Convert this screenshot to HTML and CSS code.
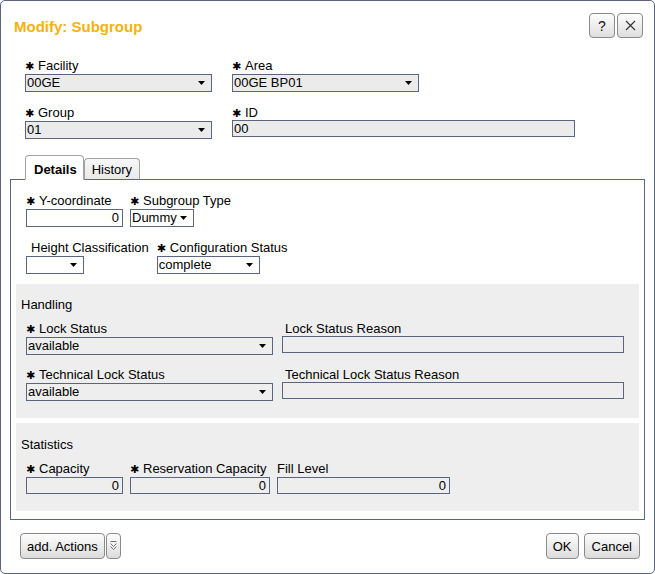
FILE: index.html
```html
<!DOCTYPE html>
<html>
<head>
<meta charset="utf-8">
<title>Modify: Subgroup</title>
<link rel="stylesheet" href="styles.css">
</head>
<body>
<div class="dialog">
  <div class="header">
    <h1 class="title">Modify: Subgroup</h1>
    <div class="hbtns">
      <button class="ibtn">?</button>
      <button class="ibtn"><svg width="11" height="11" viewBox="0 0 11 11"><path d="M1 1 L10 10 M10 1 L1 10" stroke="#333" stroke-width="1.1" fill="none"/></svg></button>
    </div>
  </div>

  <div class="topform">
    <div class="field">
      <label class="lbl"><span class="req">✱</span>Facility</label>
      <div class="sel ro w187"><span>00GE</span><svg class="arr" width="7" height="4" viewBox="0 0 7 4"><path d="M0 0 H7 L3.5 4 Z" fill="#000"/></svg></div>
    </div>
    <div class="field">
      <label class="lbl"><span class="req">✱</span>Area</label>
      <div class="sel ro w187"><span>00GE BP01</span><svg class="arr" width="7" height="4" viewBox="0 0 7 4"><path d="M0 0 H7 L3.5 4 Z" fill="#000"/></svg></div>
    </div>
    <div class="field">
      <label class="lbl"><span class="req">✱</span>Group</label>
      <div class="sel ro w187"><span>01</span><svg class="arr" width="7" height="4" viewBox="0 0 7 4"><path d="M0 0 H7 L3.5 4 Z" fill="#000"/></svg></div>
    </div>
    <div class="field">
      <label class="lbl"><span class="req">✱</span>ID</label>
      <div class="inp ro w343 left">00</div>
    </div>
  </div>

  <div class="tabs">
    <div class="tab active">Details</div>
    <div class="tab">History</div>
  </div>
  <div class="panel">
    <div class="row r1">
      <div class="field">
        <label class="lbl"><span class="req">✱</span>Y-coordinate</label>
        <div class="inp w97">0</div>
      </div>
      <div class="field">
        <label class="lbl"><span class="req">✱</span>Subgroup Type</label>
        <div class="sel w64"><span>Dummy</span><svg class="arr" width="7" height="4" viewBox="0 0 7 4"><path d="M0 0 H7 L3.5 4 Z" fill="#000"/></svg></div>
      </div>
    </div>
    <div class="row r2">
      <div class="field">
        <label class="lbl ind5">Height Classification</label>
        <div class="sel w58"><span></span><svg class="arr" width="7" height="4" viewBox="0 0 7 4"><path d="M0 0 H7 L3.5 4 Z" fill="#000"/></svg></div>
      </div>
      <div class="field">
        <label class="lbl"><span class="req">✱</span>Configuration Status</label>
        <div class="sel w103"><span>complete</span><svg class="arr" width="7" height="4" viewBox="0 0 7 4"><path d="M0 0 H7 L3.5 4 Z" fill="#000"/></svg></div>
      </div>
    </div>

    <div class="box handling">
      <div class="boxhead">Handling</div>
      <div class="row hrow">
        <div class="field">
          <label class="lbl"><span class="req">✱</span>Lock Status</label>
          <div class="sel flat w247"><span>available</span><svg class="arr" width="7" height="4" viewBox="0 0 7 4"><path d="M0 0 H7 L3.5 4 Z" fill="#000"/></svg></div>
        </div>
        <div class="field">
          <label class="lbl ind3">Lock Status Reason</label>
          <div class="inp flat w342"></div>
        </div>
      </div>
      <div class="row hrow second">
        <div class="field">
          <label class="lbl"><span class="req">✱</span>Technical Lock Status</label>
          <div class="sel flat w247"><span>available</span><svg class="arr" width="7" height="4" viewBox="0 0 7 4"><path d="M0 0 H7 L3.5 4 Z" fill="#000"/></svg></div>
        </div>
        <div class="field">
          <label class="lbl ind3">Technical Lock Status Reason</label>
          <div class="inp flat w342"></div>
        </div>
      </div>
    </div>

    <div class="box stats">
      <div class="boxhead">Statistics</div>
      <div class="row srow">
        <div class="field">
          <label class="lbl"><span class="req">✱</span>Capacity</label>
          <div class="inp flat w97 short">0</div>
        </div>
        <div class="field">
          <label class="lbl"><span class="req">✱</span>Reservation Capacity</label>
          <div class="inp flat w140 short">0</div>
        </div>
        <div class="field">
          <label class="lbl">Fill Level</label>
          <div class="inp flat w173 short">0</div>
        </div>
      </div>
    </div>
  </div>

  <div class="footer">
    <div class="fleft">
      <button class="btn">add. Actions</button>
      <button class="btn tog"><svg width="7" height="10" viewBox="0 0 7 10"><path d="M0.5 0.5 H6.5 M0.5 2.5 L3.5 5.5 L6.5 2.5 M0.5 5.5 L3.5 8.5 L6.5 5.5" stroke="#777" stroke-width="1" fill="none"/></svg></button>
    </div>
    <div class="fright">
      <button class="btn">OK</button>
      <button class="btn cancel">Cancel</button>
    </div>
  </div>
</div>
</body>
</html>
```

FILE: styles.css
```css
* { box-sizing: border-box; }
html, body { margin: 0; padding: 0; background: #fff; }
body {
  font-family: "Liberation Sans", Arial, sans-serif;
  font-size: 13px;
  color: #000;
}
.dialog {
  width: 655px;
  height: 574px;
  border: 1px solid #5b6580;
  border-radius: 5px;
  background: #fff;
  display: flex;
  flex-direction: column;
}
.header {
  display: flex;
  justify-content: space-between;
  align-items: flex-start;
  padding: 12px 11px 0 13px;
  height: 37px;
}
.title {
  margin: 5px 0 0 0;
  font-size: 15px;
  line-height: 18px;
  font-weight: bold;
  color: #f5b20c;
}
.hbtns { display: flex; gap: 2px; }
.ibtn {
  width: 26px;
  height: 25px;
  padding: 0;
  border: 1px solid #8a8a8a;
  border-radius: 4px;
  background: linear-gradient(#fdfdfd, #dedede);
  font-family: "Liberation Sans", Arial, sans-serif;
  font-size: 14px;
  color: #111;
  display: flex;
  align-items: center;
  justify-content: center;
}
.topform {
  display: grid;
  grid-template-columns: 187px auto;
  column-gap: 20px;
  row-gap: 13px;
  padding: 20px 0 0 24px;
}
.field { display: flex; flex-direction: column; align-items: flex-start; }
.lbl {
  display: block;
  line-height: 16px;
  height: 16px;
  white-space: nowrap;
}
.req {
  display: inline-block;
  width: 13px;
  font-family: "DejaVu Sans", sans-serif;
  font-size: 11px;
  line-height: 14px;
  vertical-align: top;
  margin-top: 2px;
}
.ind5 { padding-left: 5px; }
.ind3 { padding-left: 3px; }
.sel {
  height: 18px;
  border: 1px solid #5b6580;
  background: #fff;
  display: flex;
  align-items: center;
  justify-content: space-between;
  padding: 0 6px 0 1px;
  line-height: 16px;
  white-space: nowrap;
}
.sel.ro { background: #ebebeb; }
.sel.flat { background: #eeeeee; }
.arr { flex: none; }
.inp {
  height: 18px;
  border: 1px solid #5b6580;
  background: #fff;
  line-height: 16px;
  padding: 0 3px 0 1px;
  text-align: right;
}
.inp.left { text-align: left; }
.inp.ro { background: #ebebeb; height: 17px; line-height: 15px; margin-top: -1px; }
.inp.flat { background: #eeeeee; height: 17px; line-height: 15px; margin-top: -1px; }
.inp.short { height: 17px; margin-top: 0; }
.w187 { width: 187px; }
.w343 { width: 343px; }
.w97 { width: 97px; }
.w64 { width: 64px; }
.w58 { width: 58px; }
.w103 { width: 103px; }
.w247 { width: 247px; }
.w342 { width: 342px; }
.w140 { width: 140px; }
.w173 { width: 173px; }

.tabs {
  display: flex;
  align-items: flex-end;
  margin: 16px 0 -1px 24px;
  position: relative;
  z-index: 1;
}
.tab {
  border: 1px solid #a3a3a3;
  border-bottom: 1px solid #5b6580;
  border-radius: 4px 4px 0 0;
  background: linear-gradient(#f7f7f7, #e9e9e9);
  padding: 3px 7px 2px 7px;
  line-height: 15px;
}
.tab.active {
  font-weight: bold;
  background: #fff;
  border-bottom-color: #fff;
  padding: 6px 6px 2px 8px;
}
.panel {
  margin: 0 9px;
  border: 1px solid #5b6580;
  padding: 13px 5px 8px 5px;
}
.row { display: flex; align-items: flex-start; }
.r1 { margin-left: 10px; gap: 7px; }
.r2 { margin-left: 10px; gap: 8px; margin-top: 13px; }
.box {
  background: #eeeeee;
  padding: 13px 5px 17px 5px;
}
.handling { margin-top: 10px; }
.stats { margin-top: 5px; padding-top: 14px; padding-bottom: 17px; }
.boxhead { line-height: 16px; height: 16px; }
.hrow { margin: 8px 0 0 5px; gap: 9px; }
.hrow.second { margin-top: 12px; }
.srow { margin: 8px 0 0 5px; gap: 7px; }

.footer {
  display: flex;
  justify-content: space-between;
  padding: 13px 14px 0 19px;
}
.fleft, .fright { display: flex; gap: 5px; }
.fleft { gap: 1px; }
.btn {
  height: 26px;
  padding: 0 6px;
  border: 1px solid #8a8a8a;
  border-radius: 4px;
  background: linear-gradient(#fdfdfd, #dcdcdc);
  font-family: "Liberation Sans", Arial, sans-serif;
  font-size: 13px;
  color: #000;
}
.btn.cancel { padding: 0 7px; }
.btn.tog {
  width: 15px;
  padding: 0;
  display: flex;
  align-items: center;
  justify-content: center;
}
```
